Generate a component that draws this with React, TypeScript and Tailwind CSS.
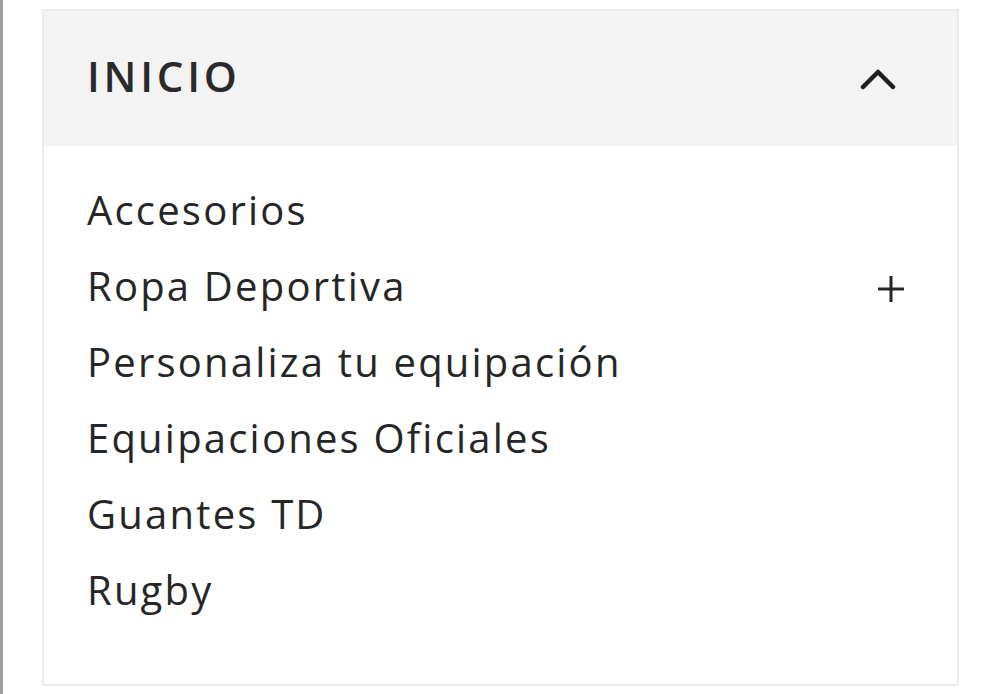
import React from 'react';

const items = [
  { label: 'Accesorios', expandable: false },
  { label: 'Ropa Deportiva', expandable: true },
  { label: 'Personaliza tu equipación', expandable: false },
  { label: 'Equipaciones Oficiales', expandable: false },
  { label: 'Guantes TD', expandable: false },
  { label: 'Rugby', expandable: false },
];

const App = () => {
  return (
    <div
      className="w-[1000px] h-[694px] bg-white border-l-[3px] border-[#9e9e9e] pt-[9px] pl-[39px]"
      style={{ fontFamily: '"Open Sans", "Liberation Sans", sans-serif' }}
    >
      <div className="w-[917px] h-[677px] border-2 border-[#ececec] bg-white">
        {/* Header */}
        <div className="h-[135px] bg-[#f3f3f3] flex items-center justify-between pl-[43px] pr-[61px]">
          <span className="mb-[5px] text-[42px] font-semibold tracking-[0.09em] text-[#2a2a2a] leading-none">
            INICIO
          </span>
          <svg width="36" height="24" viewBox="0 0 36 24" fill="none">
            <path d="M3 20 L18 5 L33 20" stroke="#1f1f1f" strokeWidth="4.5" strokeLinecap="round" strokeLinejoin="round" />
          </svg>
        </div>

        {/* Items */}
        <ul className="pt-[26px] pl-[43px] pr-[52px]">
          {items.map((item) => (
            <li key={item.label} className="flex items-center justify-between h-[76px]">
              <span className="text-[40px] tracking-[0.055em] text-[#262626] leading-none">{item.label}</span>
              {item.expandable && (
                <svg className="mt-[6px]" width="28" height="28" viewBox="0 0 28 28" fill="none">
                  <path d="M14 1 V27 M1 14 H27" stroke="#262626" strokeWidth="3" />
                </svg>
              )}
            </li>
          ))}
        </ul>
      </div>
    </div>
  );
};

export default App;
